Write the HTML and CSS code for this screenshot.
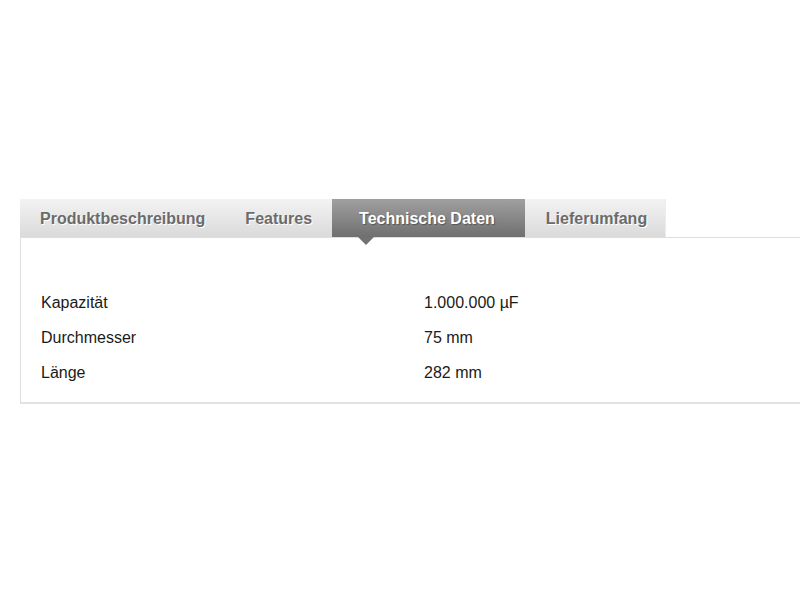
FILE: index.html
```html
<!DOCTYPE html>
<html lang="de">
<head>
<meta charset="utf-8">
<link rel="stylesheet" href="styles.css">
</head>
<body>
<div class="tabs-wrap">
  <ul class="tabs">
    <li class="tab">Produktbeschreibung</li>
    <li class="tab">Features</li>
    <li class="tab active">Technische Daten</li>
    <li class="tab">Lieferumfang</li>
  </ul>
  <div class="panel">
    <div class="row"><span class="key">Kapazität</span><span class="val">1.000.000 µF</span></div>
    <div class="row"><span class="key">Durchmesser</span><span class="val">75 mm</span></div>
    <div class="row"><span class="key">Länge</span><span class="val">282 mm</span></div>
  </div>
</div>
</body>
</html>
```

FILE: styles.css
```css
html, body {
  margin: 0;
  padding: 0;
  background: #fff;
  overflow: hidden;
}
body {
  font-family: "Liberation Sans", Arial, sans-serif;
  padding-top: 199px;
  padding-left: 20px;
}
.tabs-wrap {
  width: 820px;
}
.tabs {
  list-style: none;
  margin: 0;
  padding: 0;
  display: flex;
  height: 38px;
}
.tab {
  position: relative;
  padding: 1px 20px 0 20px;
  line-height: 37px;
  font-size: 16px;
  font-weight: bold;
  color: #6b6b6b;
  text-shadow: 1px 1px 0 #fff;
  background: linear-gradient(#f3f3f3, #dadada);
}
.tab:first-child {
  padding-left: 20px;
  padding-right: 20px;
}
.tab:last-child {
  padding-left: 21px;
  padding-right: 18px;
  border-right: 1px solid #ececec;
}
.tab.active {
  padding: 1px 30px 0 27px;
  color: #fff;
  text-shadow: 1px 1px 1px #555;
  background: linear-gradient(#a0a0a0, #6f6f6f);
}
.tab.active::after {
  content: "";
  position: absolute;
  left: 26px;
  bottom: -8px;
  border-left: 8px solid transparent;
  border-right: 8px solid transparent;
  border-top: 8px solid #727272;
}
.panel {
  border: 1px solid #dedede;
  border-bottom: 2px solid #e2e2e2;
  padding: 47px 20px 12px 20px;
}
.row {
  display: flex;
  height: 35px;
  line-height: 35px;
  font-size: 16px;
  color: #1a1a1a;
}
.key {
  width: 383px;
}
```
